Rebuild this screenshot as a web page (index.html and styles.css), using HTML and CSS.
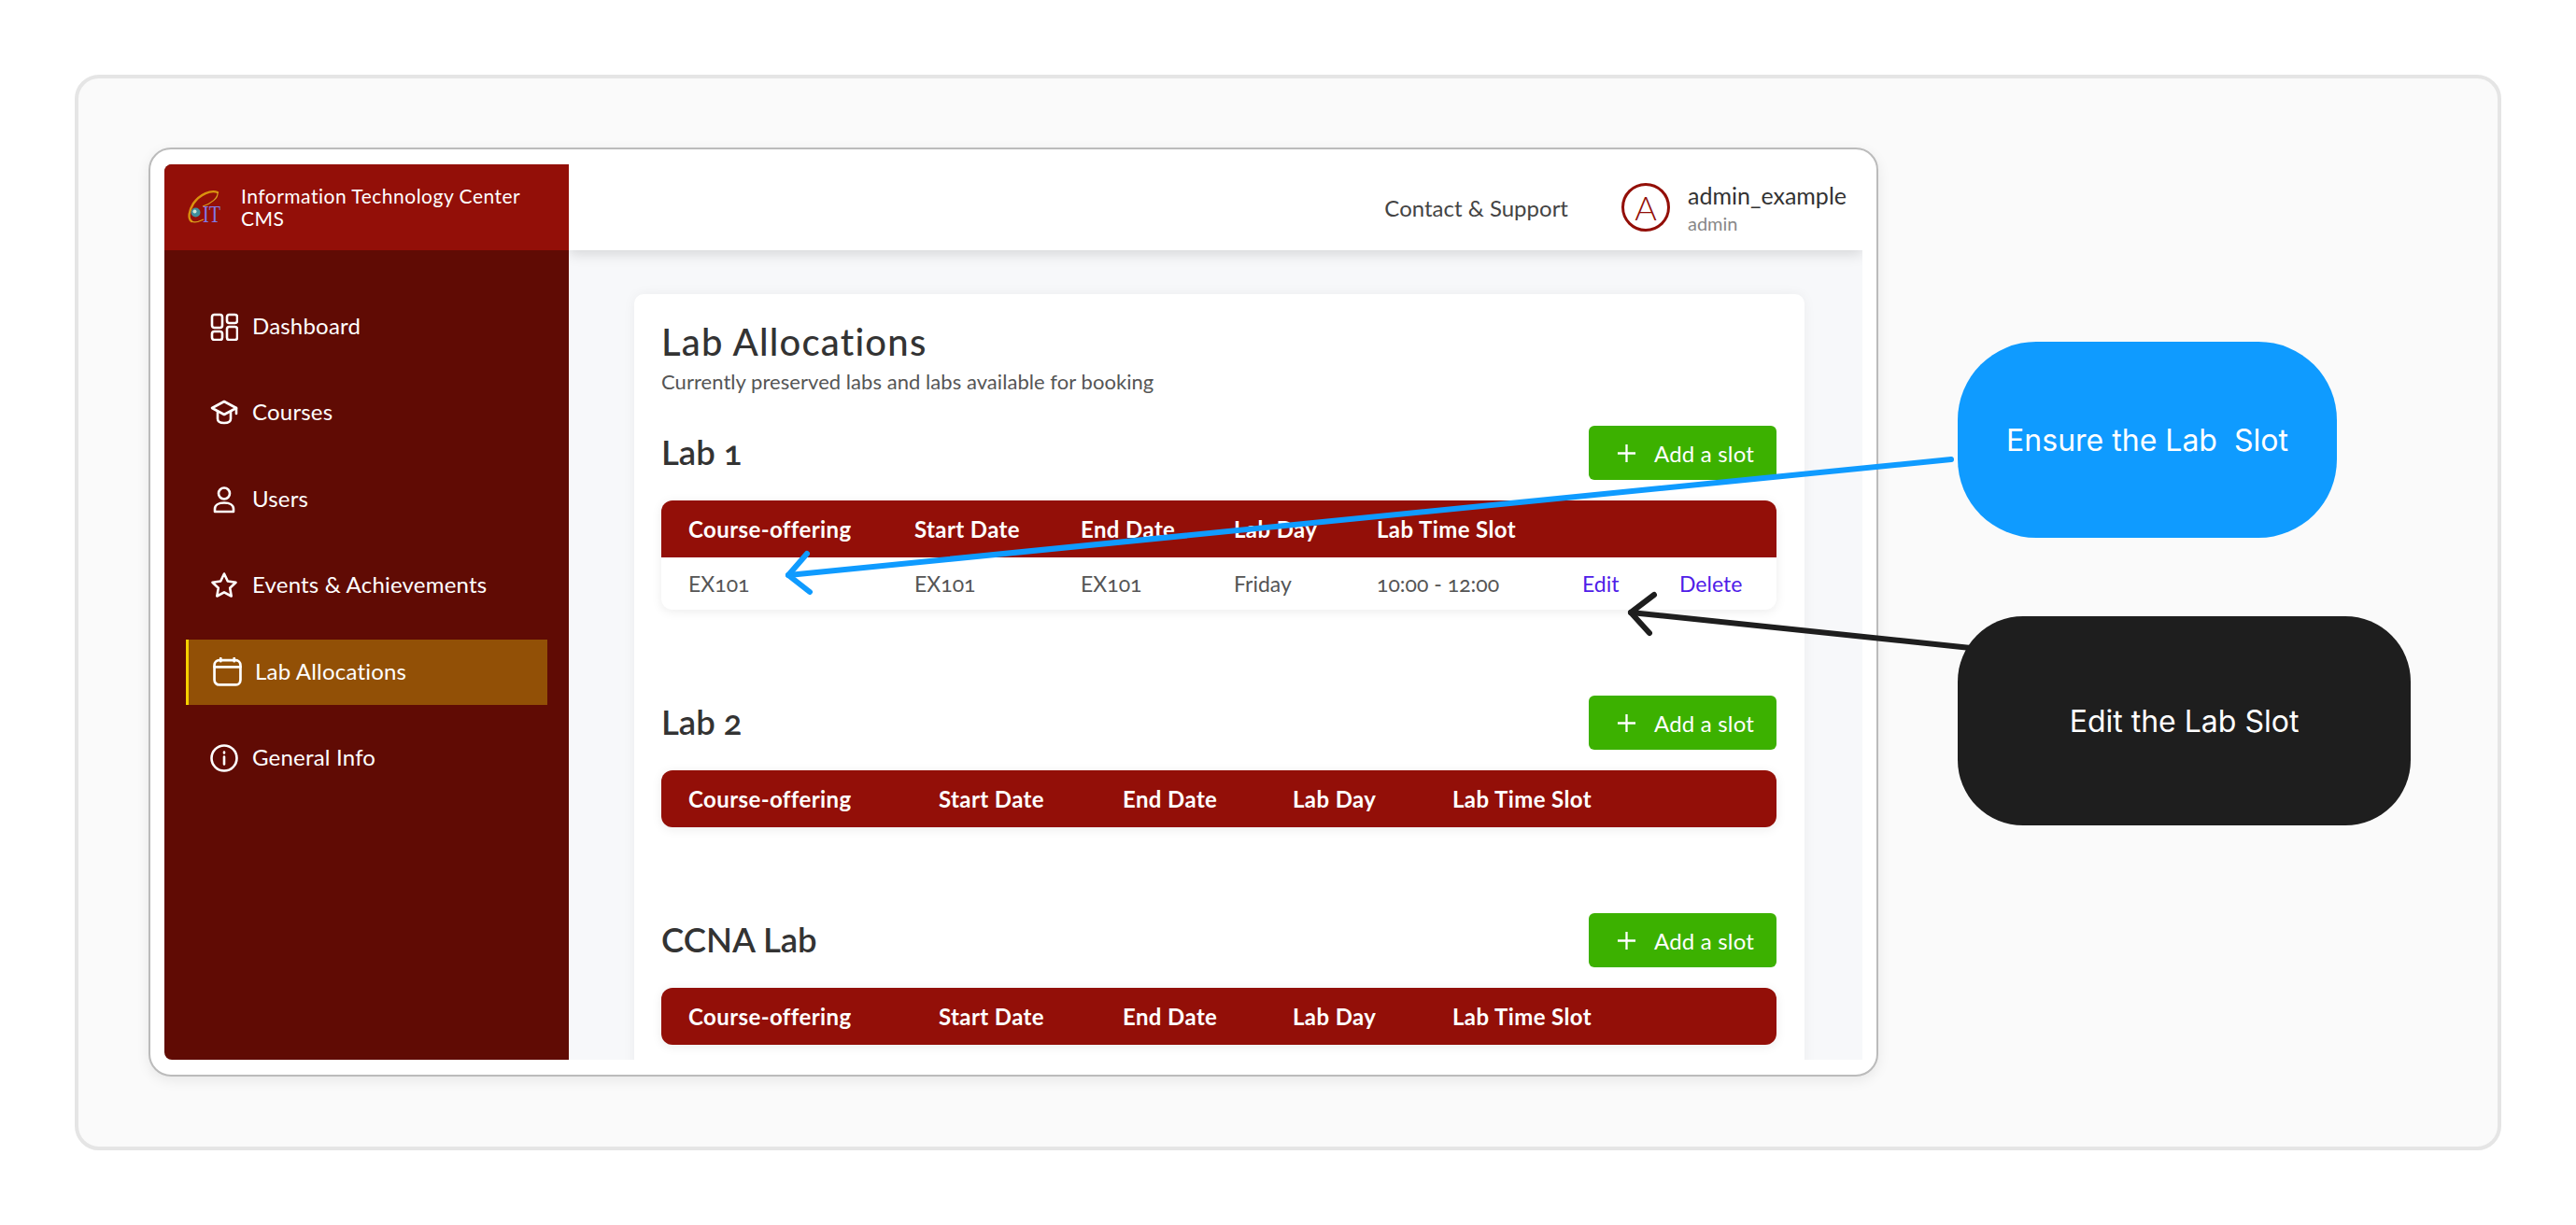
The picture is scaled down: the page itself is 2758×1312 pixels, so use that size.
FILE: index.html
```html
<!DOCTYPE html>
<html lang="en">
<head>
  <meta charset="UTF-8" />
  <title>Lab Allocations</title>
  <link rel="stylesheet" href="styles.css">
</head>
<body>

  <div class="panel">
    <div class="frame">
      <div class="app">

        <!-- Sidebar -->
        <aside class="sidebar">
          <div class="brand">
            <svg class="brand-logo" viewBox="0 0 60 55">
              <path class="logo-swoosh" d="M43 11C36 8 24 13 17 23 12 31 11 39 15 42"/>
              <path class="logo-swoosh-thin" d="M43 11C44 17 36 23 27 26M15 42C19 44 24 42 28 40"/>
              <circle cx="19.500" cy="32.500" r="5" fill="#3f8f9c"/>
              <circle cx="18.500" cy="31.500" r="2" fill="#cfe6d8"/>
              <text x="27" y="42.500" textLength="19" lengthAdjust="spacingAndGlyphs" class="logo-text">IT</text>
            </svg>
            <span class="brand-name">Information Technology Center<br>CMS</span>
          </div>
          <nav class="nav">
            <a class="nav-item">
              <svg class="nav-icon" viewBox="0 0 30 30"><rect x="2" y="2" width="11" height="14" rx="2.500"/><rect x="18" y="2" width="11" height="9" rx="2.500"/><rect x="2" y="20" width="11" height="9" rx="2.500"/><rect x="18" y="15" width="11" height="14" rx="2.500"/></svg>
              <span>Dashboard</span>
            </a>
            <a class="nav-item">
              <svg class="nav-icon" viewBox="0 0 30 30"><path d="M15 3 2 10l13 7 13-7z"/><path d="M8 13.500v8c0 3 3 4.500 7 4.500s7-1.500 7-4.500v-8"/><path d="M28 10v6"/></svg>
              <span>Courses</span>
            </a>
            <a class="nav-item">
              <svg class="nav-icon" viewBox="0 0 30 30"><circle cx="15" cy="8.500" r="6"/><path d="M5 28v-3c0-4 4-6.500 10-6.500s10 2.500 10 6.500v3z"/></svg>
              <span>Users</span>
            </a>
            <a class="nav-item">
              <svg class="nav-icon" viewBox="0 0 30 30"><path d="m15 2.500 3.800 8 8.700 1.200-6.300 6 1.500 8.800-7.700-4.200-7.700 4.200 1.500-8.800-6.300-6 8.700-1.200z"/></svg>
              <span>Events &amp; Achievements</span>
            </a>
            <a class="nav-item nav-item-active">
              <svg class="nav-icon" viewBox="0 0 30 30"><rect x="1.500" y="3" width="27" height="25.500" rx="5"/><path d="M1.500 10h27M8 1v3M22 1v3"/></svg>
              <span>Lab Allocations</span>
            </a>
            <a class="nav-item">
              <svg class="nav-icon" viewBox="0 0 30 30"><circle cx="15" cy="15" r="13.500"/><path d="M15 13.500v8M15 8.500v1"/></svg>
              <span>General Info</span>
            </a>
          </nav>
        </aside>

        <div class="main">
          <header class="topbar">
            <span class="support">Contact &amp; Support</span>
            <div class="user">
              <div class="avatar">A</div>
              <div class="user-text">
                <div class="user-name">admin_example</div>
                <div class="user-role">admin</div>
              </div>
            </div>
          </header>

          <div class="content">
            <div class="card">
              <h1>Lab Allocations</h1>
              <p class="subtitle">Currently preserved labs and labs available for booking</p>

              <section class="lab">
                <div class="lab-head">
                  <h2>Lab 1</h2>
                  <button class="add-btn"><svg viewBox="0 0 22 22"><path d="M11 1v20M1 11h20"/></svg>Add a slot</button>
                </div>
                <div class="slots">
                  <div class="slots-row slots-head cols-full">
                    <span>Course-offering</span><span>Start Date</span><span>End Date</span><span>Lab Day</span><span>Lab Time Slot</span>
                  </div>
                  <div class="slots-row slots-body cols-full">
                    <span>EX101</span><span>EX101</span><span>EX101</span><span>Friday</span><span>10:00 - 12:00</span><a>Edit</a><a>Delete</a>
                  </div>
                </div>
              </section>

              <section class="lab">
                <div class="lab-head">
                  <h2>Lab 2</h2>
                  <button class="add-btn"><svg viewBox="0 0 22 22"><path d="M11 1v20M1 11h20"/></svg>Add a slot</button>
                </div>
                <div class="slots">
                  <div class="slots-row slots-head cols-empty">
                    <span>Course-offering</span><span>Start Date</span><span>End Date</span><span>Lab Day</span><span>Lab Time Slot</span>
                  </div>
                </div>
              </section>

              <section class="lab">
                <div class="lab-head">
                  <h2>CCNA Lab</h2>
                  <button class="add-btn"><svg viewBox="0 0 22 22"><path d="M11 1v20M1 11h20"/></svg>Add a slot</button>
                </div>
                <div class="slots">
                  <div class="slots-row slots-head cols-empty">
                    <span>Course-offering</span><span>Start Date</span><span>End Date</span><span>Lab Day</span><span>Lab Time Slot</span>
                  </div>
                </div>
              </section>
            </div>
          </div>
        </div>

      </div>
    </div>
  </div>

  <!-- Annotations on top of the screenshot -->
  <svg class="arrows" viewBox="0 0 2758 1312">
    <g class="arrow-blue">
      <path d="M2089 492 844 616"/>
      <path d="M864 593 844 616 867 634"/>
    </g>
    <g class="arrow-dark">
      <path d="M2110 694 1746 656"/>
      <path d="M1771 637 1746 656 1766 678"/>
    </g>
  </svg>
  <div class="callout callout-blue">Ensure the Lab&nbsp; Slot</div>
  <div class="callout callout-dark">Edit the Lab Slot</div>

</body>
</html>
```

FILE: styles.css
```css
html, body {
  margin: 0;
  padding: 0;
  background-color: #ffffff;
  font-family: Lato, "Open Sans", sans-serif;
  font-variant-numeric: oldstyle-nums;
}

body {
  position: relative;
  width: 2758px;
  height: 1312px;
  overflow: hidden;
}

.panel {
  position: absolute;
  left: 80px;
  top: 80px;
  width: 2598px;
  height: 1152px;
  box-sizing: border-box;
  padding: 74px 0 0 75px;
  background: #fafafa;
  border: 4px solid #e5e5e5;
  border-radius: 26px;
}

.frame {
  width: 1852px;
  height: 995px;
  box-sizing: border-box;
  padding: 16px 15px;
  background: white;
  border: 2px solid #bbbbbb;
  border-radius: 24px;
  box-shadow: 0 4px 14px rgba(0, 0, 0, 0.08);
}

.app {
  display: flex;
  height: 100%;
  overflow: hidden;
  border-radius: 8px 0 0 8px;
}

/* Sidebar */
.sidebar {
  width: 433px;
  flex-shrink: 0;
  background: #600b04;
  color: white;
  position: relative;
  z-index: 2;
}

.brand {
  display: flex;
  align-items: center;
  height: 92px;
  padding-left: 14px;
  background: #930f08;
}

.brand-logo {
  width: 60px;
  height: 55px;
  margin-right: 8px;
  flex-shrink: 0;
}

.logo-swoosh {
  fill: none;
  stroke: #d9920f;
  stroke-width: 2.4;
  stroke-linecap: round;
}

.logo-swoosh-thin {
  fill: none;
  stroke: #d9a020;
  stroke-width: 1.2;
}

.logo-text {
  font-family: "Liberation Serif", serif;
  font-size: 25px;
  fill: #7f7ce8;
}

.brand-name {
  font-size: 21px;
  line-height: 24px;
  letter-spacing: 0.5px;
}

.nav {
  padding: 47px 23px 0;
}

.nav-item {
  display: flex;
  align-items: center;
  gap: 15px;
  height: 70px;
  margin-bottom: 22.4px;
  padding-left: 26px;
  font-size: 24px;
  letter-spacing: 0.2px;
}

.nav-item span {
  margin-top: -3px;
}

.nav-icon {
  width: 30px;
  height: 30px;
  flex-shrink: 0;
  fill: none;
  stroke: white;
  stroke-width: 2.6;
  stroke-linejoin: round;
  stroke-linecap: round;
}

.nav-item-active {
  background: #925006;
  border-left: 3px solid #f5d000;
  gap: 14px;
}

.nav-item-active .nav-icon {
  width: 31px;
  height: 31px;
}

/* Main */
.main {
  flex: 1;
  min-width: 0;
  background: #f7f8fa;
}

.topbar {
  display: flex;
  align-items: center;
  justify-content: flex-end;
  height: 92px;
  padding-right: 17px;
  background: white;
  box-shadow: 0 4px 14px rgba(0, 0, 0, 0.14);
  position: relative;
}

.support {
  font-size: 24px;
  color: #444444;
  margin-right: 57px;
}

.user {
  display: flex;
  align-items: center;
  gap: 19px;
}

.avatar {
  display: flex;
  align-items: center;
  justify-content: center;
  width: 52px;
  height: 52px;
  box-sizing: border-box;
  border: 3px solid #930f08;
  border-radius: 50%;
  color: #930f08;
  font-size: 36px;
  font-weight: 300;
}

.user-text {
  padding-top: 4px;
}

.user-name {
  font-size: 25px;
  color: #333333;
  line-height: 30px;
}

.user-role {
  font-size: 20px;
  color: #888888;
  line-height: 30px;
}

.content {
  padding: 47px 62px 0 70px;
}

.card {
  background: white;
  border-radius: 10px;
  padding: 27px 30px 40px 29px;
  box-shadow: 0 0 14px rgba(0, 0, 0, 0.05);
  height: 900px;
}

h1 {
  margin: 0;
  font-size: 40px;
  font-weight: 500;
  letter-spacing: 1.2px;
  line-height: 48px;
  color: #333333;
}

.subtitle {
  margin: 6px 0 0;
  font-size: 22px;
  letter-spacing: 0.05px;
  line-height: 26px;
  color: #555555;
}

.lab {
  margin-bottom: 92px;
}

.lab:first-of-type {
  margin-top: 34px;
}

.lab-head {
  display: flex;
  justify-content: space-between;
  align-items: center;
  margin-bottom: 22px;
}

h2 {
  margin: 0;
  padding-bottom: 3px;
  font-size: 36.5px;
  font-weight: 600;
  color: #333333;
}

.add-btn {
  display: flex;
  align-items: center;
  gap: 19px;
  width: 201px;
  height: 58px;
  padding: 0 0 0 30px;
  background: #3cb100;
  color: white;
  font-family: inherit;
  font-size: 24px;
  letter-spacing: 0.2px;
  border: none;
  border-radius: 6px;
}

.add-btn svg {
  width: 21px;
  height: 21px;
  fill: none;
  stroke: white;
  stroke-width: 2.4;
}

.slots {
  border-radius: 12px;
  overflow: hidden;
  background: white;
  box-shadow: 0 2px 12px rgba(0, 0, 0, 0.08);
}

.slots-row {
  display: grid;
  align-items: center;
  padding-left: 29px;
}

.cols-full {
  grid-template-columns: 242px 178px 164px 153px 220px 104px 1fr;
}

.cols-empty {
  grid-template-columns: 268px 197px 182px 171px 1fr;
}

.slots-head {
  height: 61px;
  background: #930f08;
  color: white;
  font-size: 24px;
  font-weight: 700;
  letter-spacing: 0.4px;
}

.slots-body {
  height: 56px;
  font-size: 23px;
  color: #555555;
}

.slots-body a {
  color: #4f1ce8;
}

/* Annotations */
.arrows {
  position: absolute;
  left: 0;
  top: 0;
  width: 2758px;
  height: 1312px;
  fill: none;
  stroke-width: 6;
  stroke-linecap: round;
  stroke-linejoin: round;
}

.arrow-blue {
  stroke: #0f9bff;
}

.arrow-dark {
  stroke: #1e1e1e;
}

.callout {
  position: absolute;
  display: flex;
  align-items: center;
  justify-content: center;
  color: white;
  font-family: Inter, sans-serif;
  font-size: 32px;
}

.callout-blue {
  left: 2096px;
  top: 366px;
  width: 406px;
  height: 210px;
  background: #0f9bff;
  border-radius: 84px;
}

.callout-dark {
  left: 2096px;
  top: 660px;
  width: 485px;
  height: 224px;
  background: #1e1e1e;
  border-radius: 70px;
}
```
